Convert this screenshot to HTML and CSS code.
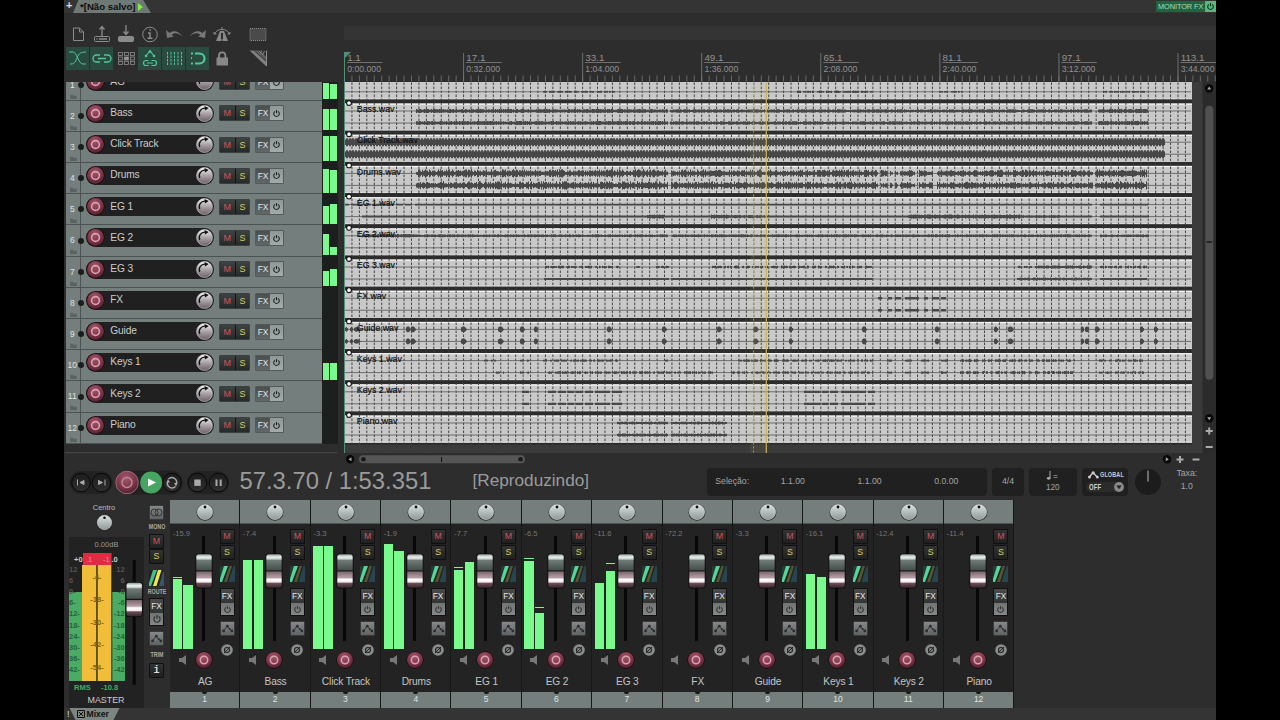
FILE: index.html
```html
<!DOCTYPE html>
<html lang="pt-BR">
<head>
<meta charset="utf-8">
<title>Não salvo</title>
<link rel="stylesheet" href="styles.css">
</head>
<body>
<svg class="defs" aria-hidden="true">
  <defs>
    <radialGradient id="gRed" cx=".45" cy=".3" r=".75"><stop offset="0" stop-color="#a2566a"/><stop offset=".6" stop-color="#7c3448"/><stop offset="1" stop-color="#4a1c29"/></radialGradient>
    <linearGradient id="gKnob" x1="0" y1="0" x2="0" y2="1"><stop offset="0" stop-color="#f4f4f4"/><stop offset=".5" stop-color="#aaa4a8"/><stop offset="1" stop-color="#6e6068"/></linearGradient>
    <linearGradient id="gPan" x1="0" y1="0" x2="0" y2="1"><stop offset="0" stop-color="#dce2e2"/><stop offset="1" stop-color="#8f9898"/></linearGradient>
    <linearGradient id="gBtn" x1="0" y1="0" x2="0" y2="1"><stop offset="0" stop-color="#1c1c1c"/><stop offset="1" stop-color="#303030"/></linearGradient>
    <linearGradient id="gFader" x1="0" y1="0" x2="0" y2="1">
      <stop offset="0" stop-color="#8f9794"/><stop offset=".08" stop-color="#e8f0ec"/><stop offset=".14" stop-color="#c9d2ce"/><stop offset=".18" stop-color="#707a76"/>
      <stop offset=".46" stop-color="#46504c"/><stop offset=".5" stop-color="#151515"/><stop offset=".53" stop-color="#806a72"/><stop offset=".7" stop-color="#b5a0a8"/>
      <stop offset=".75" stop-color="#fff"/><stop offset=".83" stop-color="#f2e8ec"/><stop offset=".87" stop-color="#6b4d57"/><stop offset="1" stop-color="#3a282e"/>
    </linearGradient>
    <symbol id="rec" viewBox="0 0 20 20"><circle cx="10" cy="10" r="9.6" fill="#17090d"/><circle cx="10" cy="10" r="8.9" fill="url(#gRed)"/><circle cx="10" cy="10" r="4.1" fill="none" stroke="#d8a3ae" stroke-width="1.7"/></symbol>
    <symbol id="vol" viewBox="0 0 20 20"><circle cx="10" cy="10" r="8.400" fill="url(#gKnob)" stroke="#d5d0d2" stroke-width=".6"/><path d="M5 12.500A5.800 5.800 0 0 1 11 4.400" fill="none" stroke="#111" stroke-width="1.400"/><path d="M10 2l4.500 2.200-4 2.600z" fill="#111"/></symbol>
    <symbol id="pan" viewBox="0 0 18 18"><circle cx="9" cy="9.4" r="8.4" fill="#222"/><circle cx="9" cy="9" r="7.6" fill="url(#gPan)" stroke="#eef2f2" stroke-width=".5"/><circle cx="9" cy="4" r="1.4" fill="#111"/></symbol>
    <symbol id="pow" viewBox="0 0 10 10"><path d="M3.3 2.6a3.1 3.1 0 1 0 3.4 0M5 1v3.8" fill="none" stroke="currentColor" stroke-width="1.2"/></symbol>
    <symbol id="folder" viewBox="0 0 8 6"><path d="M0 1h3l1 1h4v4H0z" fill="#5b6362"/></symbol>
    <symbol id="env" viewBox="0 0 15 15"><path d="M3 10.300L7 4.800l3 3.400 2.500 2" fill="none" stroke="#2b2e2e" stroke-width="1"/><circle cx="3" cy="10.300" r="1.600" fill="#2b2e2e"/><circle cx="7.300" cy="4.800" r="1.600" fill="#2b2e2e"/><circle cx="12.500" cy="10.300" r="1.600" fill="#2b2e2e"/><circle cx="10" cy="8" r="1.100" fill="#2b2e2e"/></symbol>
    <symbol id="phase" viewBox="0 0 12 12"><circle cx="6" cy="6" r="5.800" fill="#8a8d8d"/><circle cx="6" cy="6" r="2.500" fill="none" stroke="#222" stroke-width="1.100"/><path d="M3 9L9 3" stroke="#222" stroke-width="1"/></symbol>
    <symbol id="spk" viewBox="0 0 8 10"><path d="M0 3h3l4-3v10l-4-3H0z" fill="#777"/></symbol>
    <symbol id="route" viewBox="0 0 15 16"><path d="M0 16L6 0H0z" fill="#203c33"/><path d="M0 16v-3L4 0h4L2 16z" fill="#55d59b"/><path d="M4 16L9.500 0h2.500L7 16z" fill="#5c532f"/><path d="M8.500 16L13.500 0H15v16z" fill="#284450"/></symbol>
    <symbol id="routeOn" viewBox="0 0 15 16"><path d="M0 16v-3L4 0h4L2 16z" fill="#45c08c"/><path d="M4 16L9 0h3.500L7.500 16z" fill="#efe64d"/><path d="M10 16L14 2h1v14z" fill="#35576a"/></symbol>
    <symbol id="fader" viewBox="0 0 18 36"><rect x=".5" y=".5" width="17" height="35" rx="3" fill="#0b0b0b"/><rect x="1.300" y="1.300" width="15.400" height="33.400" rx="2.500" fill="url(#gFader)"/></symbol>
  </defs>
</svg>

<div class="app">
  <header class="tabs">
    <span class="tabs-add">+</span>
    <span class="tab">*[Não salvo]<i class="tab-play"></i></span>
    <span class="monitor">MONITOR FX<b><svg width="9" height="9"><use href="#pow"/></svg></b></span>
  </header>

  <div class="upper">
    <aside class="side">
      <div class="toolbar">
        <span class="tool"><svg viewBox="0 0 24 24"><path d="M7.500 6h6l4 4v8.500h-10zM13.500 6v4h4"/></svg></span>
        <span class="tool"><svg viewBox="0 0 24 24"><rect x="4.500" y="14.500" width="15" height="5" rx="1"/><path d="M12 14V5M9.500 7.500L12 4.500l2.500 3M6.500 17h1M9 17h8" stroke-width="1.300"/></svg></span>
        <span class="tool"><svg viewBox="0 0 24 24"><rect x="4.500" y="14.500" width="15" height="5" rx="1" fill="#8a8a8a"/><path d="M12 3v9M9.500 9.500L12 12.500l2.500-3" stroke-width="1.300"/></svg></span>
        <span class="tool"><svg viewBox="0 0 24 24"><circle cx="12" cy="12.500" r="7.300"/><path d="M10 11h2v5M9.500 16.300h5M11.500 8h1.500" stroke-width="1.400"/></svg></span>
        <span class="tool"><svg viewBox="0 0 24 24"><path d="M4 8l1 8 7-1.500-2.500-1.500c3-3 7-2 11 1.500-4-6-9.500-6.500-13-3.500z" fill="#777" stroke="none"/></svg></span>
        <span class="tool"><svg viewBox="0 0 24 24"><path d="M20 8l-1 8-7-1.500 2.500-1.500c-3-3-7-2-11 1.500 4-6 9.500-6.500 13-3.500z" fill="#777" stroke="none"/></svg></span>
        <span class="tool"><svg viewBox="0 0 24 24"><path d="M10 9h4l4 10h-5V11h-2v8H6z" fill="#888" stroke="none"/><path d="M4.500 12c2-6 13-6 15 0M12 5v2M9 18h6M4 10v2h2.500M20 10v2h-2.500"/></svg></span>
        <span class="tool wide"><svg viewBox="0 0 24 24"><rect x="4" y="6.500" width="16" height="12" fill="#4a4a4a" stroke-dasharray="1 1"/></svg></span>
        <span class="tool on"><svg viewBox="0 0 24 24"><path d="M3 6h4c4 0 5 12 10 12h3M4 18c4 0 5-1 7-6s4-6 9-6"/></svg></span>
        <span class="tool on"><svg viewBox="0 0 24 24"><path d="M10 9H6.500a3.500 3.500 0 0 0 0 7H10M14 9h3.500a3.500 3.500 0 0 1 0 7H14M8 12.500h8" stroke-width="1.300"/></svg></span>
        <span class="tool"><svg viewBox="0 0 24 24"><g stroke-width=".8"><rect x="4.500" y="6.500" width="4" height="3"/><rect x="10.500" y="6.500" width="4" height="3"/><rect x="16.500" y="6.500" width="4" height="3"/><rect x="4.500" y="11" width="4" height="3"/><rect x="10.500" y="11" width="4" height="3" fill="#999"/><rect x="16.500" y="11" width="4" height="3"/><rect x="4.500" y="15.500" width="4" height="3"/><rect x="10.500" y="15.500" width="4" height="3"/><rect x="16.500" y="15.500" width="4" height="3"/></g></svg></span>
        <span class="tool on"><svg viewBox="0 0 24 24"><path d="M8 10l4-5 4 5M10.500 14.500H8a2.500 2.500 0 0 0 0 5h2.500M13.500 14.500H16a2.500 2.500 0 0 1 0 5h-2.500M9 17h6" stroke-width="1.200"/><g fill="#4fc99a" stroke="none"><circle cx="8" cy="10" r="1.300"/><circle cx="12" cy="5.500" r="1.300"/><circle cx="16" cy="10" r="1.300"/></g></svg></span>
        <span class="tool on"><svg viewBox="0 0 24 24"><path d="M5.500 6v13M9 6v13M12.500 6v13M16 6v13M19.500 6v13" stroke-dasharray="2.500 1"/></svg></span>
        <span class="tool on"><svg viewBox="0 0 24 24"><path d="M9 7.500h4.500a4.800 4.800 0 0 1 0 10H9" stroke-width="2.200"/><path d="M5 7.500h2M5 17.500h2M5 12h1" stroke-width="2"/></svg></span>
        <span class="tool"><svg viewBox="0 0 24 24"><rect x="6.500" y="11.500" width="11.500" height="8" fill="#888" stroke="none"/><path d="M9 12V9.500a3.200 3.200 0 0 1 6.400 0V12" stroke-width="1.800"/></svg></span>
        <span class="tool wide"><svg viewBox="0 0 24 24"><path d="M3.500 4.500h4L20.500 16v4.500z" fill="#808080" stroke="none"/><path d="M8 4.500h3.500L20.500 13v1.800z" fill="#5e5e5e" stroke="none"/><path d="M12.500 4.500l8 7.500M15.500 4.500l-1 3M18.500 5l-2 4M20.500 4.500V20"/></svg></span>
      </div>
      <div class="tcp" id="tcp"></div>
    </aside>

    <section class="arrange">
      <div class="band"></div>
      <svg class="ruler" id="ruler" viewBox="344 40 872 41.500"></svg>
      <div class="arrange-body">
        <svg class="canvas" id="canvas" viewBox="344 81.500 858.500 371.500"></svg>
        <svg class="vbar" viewBox="1202.500 81.500 13.500 371.500">
          <circle cx="1208.700" cy="88" r="4.200" fill="#080808"/><path d="M1206.700 89l2-3 2 3z" fill="#aaa"/>
          <rect x="1204.800" y="105.300" width="8" height="274" rx="4" fill="#505050"/><path d="M1206 241.500h5.500" stroke="#111" stroke-width="1.300"/>
          <circle cx="1208.700" cy="417.700" r="4.200" fill="#080808"/><path d="M1206.700 416.700l2 3 2-3z" fill="#aaa"/>
          <path d="M1208.700 427v7M1205.200 430.500h7M1205.200 446.500h7" stroke="#aaa" stroke-width="2"/>
        </svg>
      </div>
    </section>
  </div>

  <svg class="hbar" viewBox="64 452 1152 14">
    <path d="M65 452.700h272" stroke="#4a4a4a"/>
    <circle cx="350.200" cy="459.300" r="4.200" fill="#080808"/><path d="M351.500 457.300l-3 2 3 2z" fill="#aaa"/>
    <rect x="359" y="455.300" width="166" height="8" rx="4" fill="#565656"/>
    <circle cx="363.500" cy="459.300" r="2.300" fill="#1a1a1a"/><circle cx="520.500" cy="459.300" r="2.300" fill="#1a1a1a"/><path d="M441.500 457v5" stroke="#111"/>
    <circle cx="1167" cy="459.300" r="4.200" fill="#080808"/><path d="M1165.800 457.300l3 2-3 2z" fill="#aaa"/>
    <path d="M1180 456v7M1176.500 459.500h7M1192.500 459.500h7" stroke="#aaa" stroke-width="2"/>
  </svg>

  <section class="transport">
    <svg class="controls" viewBox="64 466 170 34">
      <rect x="69.500" y="471" width="43" height="23" rx="11.500" fill="#222"/><rect x="115" y="470.500" width="68" height="24" rx="12" fill="#222"/><rect x="187" y="471" width="42" height="23" rx="11.500" fill="#222"/>
      <g fill="url(#gBtn)" stroke="#080808"><circle cx="81" cy="482.500" r="9.300"/><circle cx="101.500" cy="482.500" r="9.300"/><circle cx="172" cy="482.500" r="9.300"/><circle cx="197.500" cy="482.500" r="9.300"/><circle cx="218.500" cy="482.500" r="9.300"/></g>
      <circle cx="127" cy="482.500" r="11.300" fill="url(#gRed)" stroke="#b98a94" stroke-width=".7"/><circle cx="127" cy="482.500" r="5" fill="none" stroke="#b98a94" stroke-width="1.500"/>
      <circle cx="151.200" cy="482.500" r="11" fill="#45a561"/><path d="M148 478.500l8 4-8 4z" fill="#fff"/>
      <path d="M77.500 479.500v6M84 480.500v4l-4-2z" fill="#aaa" stroke="#aaa" stroke-width="1"/>
      <path d="M105 479.500v6M98.500 480.500v4l4-2z" fill="#aaa" stroke="#aaa" stroke-width="1"/>
      <path d="M168.500 479a4.700 4.700 0 0 1 7.500 5.500M175.500 486.500a4.700 4.700 0 0 1-7.500-5.500" fill="none" stroke="#aaa" stroke-width="1.500"/><path d="M174 483l3.500 0-1.500 3.500zM166.500 482.500h3.500l-2-3.500z" fill="#aaa"/>
      <rect x="194.300" y="479.500" width="6.400" height="6.400" fill="#aaa"/><path d="M216.500 479.500v6.500M220.700 479.500v6.500" stroke="#aaa" stroke-width="2"/>
    </svg>
    <span class="time">57.3.70 / 1:53.351</span>
    <span class="state">[Reproduzindo]</span>
    <div class="box sel"><span>Seleção:</span><span>1.1.00</span><span>1.1.00</span><span>0.0.00</span></div>
    <div class="box sig">4/4</div>
    <div class="box bpm"><svg width="14" height="10" viewBox="0 0 14 10"><path d="M4 0v7" stroke="#aaa"/><ellipse cx="2.700" cy="7.300" rx="1.800" ry="1.400" fill="#aaa"/><path d="M7.500 4.500h4M7.500 6.500h4" stroke="#777"/></svg><span>120</span></div>
    <div class="box glob"><div><svg width="11" height="8" viewBox="0 0 11 8"><path d="M1 6.500l4-5 4.500 5" fill="none" stroke="#ccc" stroke-width="1.300"/><circle cx="1.500" cy="6" r="1.500" fill="#ccc"/><circle cx="5.200" cy="1.800" r="1.600" fill="#ccc"/><circle cx="9.300" cy="6" r="1.500" fill="#ccc"/></svg><b>GLOBAL</b></div><div class="off"><b>OFF</b><svg width="10" height="10" viewBox="0 0 10 10"><circle cx="5" cy="5" r="4.900" fill="#8a8a8a"/><path d="M2.300 3.500h5.400L5 7.300z" fill="#222"/></svg></div></div>
    <svg class="rate" width="28" height="28" viewBox="0 0 28 28"><circle cx="14" cy="14" r="13" fill="#1c1c1c"/><path d="M14 2.500v11" stroke="#bbb"/></svg>
    <div class="taxa"><span>Taxa:</span><span>1.0</span></div>
  </section>

  <section class="mixer">
    <div class="master">
      <div class="master-main">
        <span class="centro">Centro</span>
        <svg width="17" height="17"><use href="#pan"/></svg>
        <svg class="master-meter" id="master" viewBox="69 537 75 171"></svg>
      </div>
      <div class="master-buttons">
        <span class="btn gray"><svg width="13" height="11" viewBox="0 0 13 11"><g fill="none" stroke="#333"><circle cx="4.500" cy="5.500" r="3.500"/><circle cx="8.500" cy="5.500" r="3.500"/></g></svg></span>
        <span class="cap">MONO</span>
        <span class="btn m">M</span><span class="btn s">S</span>
        <svg class="mroute" width="15" height="16"><use href="#routeOn"/></svg>
        <span class="cap">ROUTE</span>
        <span class="btn fx">FX</span><span class="btn pw"><svg width="10" height="10"><use href="#pow"/></svg></span>
        <span class="btn gray menv"><svg width="13" height="13"><use href="#env"/></svg></span>
        <span class="cap trim">TRIM</span>
        <span class="btn info">i</span>
      </div>
    </div>
    <div class="strips" id="strips"></div>
  </section>

  <footer class="dock"><span>!</span><span class="dock-tab"><svg width="8" height="8" viewBox="0 0 8 8"><path d="M.5.5h7v7h-7zM2 2l4 4M6 2L2 6" fill="none" stroke="#111"/></svg>Mixer</span></footer>
</div>
<script src="app.js"></script>
</body>
</html>
```
FILE: styles.css
```css
* { box-sizing: border-box; }
body { margin: 0; background: #000; width: 1280px; height: 720px; overflow: hidden; font-family: "Liberation Sans", Arial, sans-serif; color: #aaa; }
svg { display: block; flex: none; }
.defs { width: 0; height: 0; position: absolute; }
.app { width: 1152px; height: 720px; margin: 0 64px; background: #2d2d2d; display: flex; flex-direction: column; overflow: hidden; }

.tabs { height: 13px; flex: none; background: #343434; display: flex; align-items: flex-start; }
.tabs-add { width: 9px; padding-left: 2px; font-size: 11px; line-height: 11px; font-weight: bold; color: #ddd; }
.tab { width: 78px; height: 13px; padding-left: 7px; background: #6e7874; clip-path: polygon(7% 0, 90% 0, 100% 100%, 0 100%); color: #0c0c0c; font-weight: bold; font-size: 9.600px; line-height: 12px; display: flex; align-items: center; white-space: nowrap; gap: 3px; }
.tab-play { border-left: 5px solid #7df03c; border-top: 4px solid transparent; border-bottom: 4px solid transparent; }
.monitor { margin: 1px 0 0 auto; height: 11px; width: 60px; background: #24633f; color: #a9dcb8; font-size: 7.400px; line-height: 11px; padding-left: 2px; display: flex; justify-content: space-between; white-space: nowrap; border-radius: 1px; letter-spacing: -.100px; }
.monitor b { width: 11px; background: #5bb57c; color: #10361f; display: grid; place-items: center; }

.upper { height: 439px; flex: none; display: flex; }
.side { width: 280px; flex: none; display: flex; flex-direction: column; }
.toolbar { height: 68.500px; flex: none; padding: 9px 0 0 2px; display: grid; grid-template-columns: repeat(7, 24px) 48px; grid-auto-rows: 24px; align-content: start; }
.tool { width: 22.500px; height: 22.500px; margin-top: 1px; }
.tool.wide { margin-left: 12px; }
.tool svg { width: 24px; height: 24px; margin: -1px 0 0 -.500px; fill: none; stroke: #8c8c8c; stroke-width: 1; }
.tool.on { background: #2b4a40; }
.tool.on svg { stroke: #4fc99a; }

.tcp { height: 362.300px; flex: none; margin-left: 1.500px; width: 272.500px; overflow: hidden; display: flex; flex-direction: column; justify-content: flex-end; background: #1d1f1e; }
.track { height: 31.200px; flex: none; display: flex; }
.track-panel { width: 256.300px; background: #747e7c; border-bottom: 1px solid #4b5352; display: flex; align-items: flex-start; }
.track-num { width: 15.500px; height: 100%; border-right: 1px solid #4b5352; font-size: 8.500px; color: #dde3e2; text-align: center; padding: 10px 1px 0 0; line-height: 10px; flex: none; }
.track-num svg { margin: 4px 0 0 4px; }
.track-dot { width: 6px; height: 6px; border-radius: 50%; background: #1a1d1d; margin: 12.200px 2.300px 0 -3px; flex: none; }
.pill { width: 128px; height: 19px; margin-top: 2.900px; border-radius: 10px; background: #202020; display: flex; align-items: center; font-size: 10.200px; letter-spacing: -.150px; color: #ccc; flex: none; line-height: 19px; }
.pill b { font-weight: normal; flex: 1; padding: 0 0 1.400px 5px; white-space: nowrap; }
.pair { display: flex; height: 16px; margin: 4.700px 0 0 4.500px; border: 1px solid #3a3f3e; border-radius: 1px; font-size: 9px; line-height: 14px; text-align: center; background: linear-gradient(#3d4241, #272a2a); }
.pair span { width: 14.800px; }
.pair span + span { border-left: 1px solid #151515; }
.m { color: #cf5560; }
.s { color: #d6cf5e; }
.pair.fxp { background: linear-gradient(#4a5050, #606766); color: #e4e8e8; margin-left: 4.500px; font-size: 8.300px; border-color: #535a59; width: 29px; }
.pair.fxp span + span { background: linear-gradient(#8f9897, #a2abaa); border: 0; width: 13px; color: #222; display: grid; place-items: center; }
.track-meter { display: flex; align-items: flex-end; gap: 1.300px; padding: 0 0 1px 1.200px; width: 16px; height: 30.500px; }
.track-meter i { width: 6.200px; background: #78fb8c; }

.arrange { flex: 1; min-width: 0; display: flex; flex-direction: column; }
.band { height: 14px; margin-top: 13px; background: #343434; flex: none; }
.ruler { width: 872px; height: 41.500px; }
.ruler text { fill: #929292; }
.arrange-body { display: flex; background: #2b2b2b; height: 370.500px; }
.canvas { width: 858.500px; height: 371.500px; }
.vbar { width: 13.500px; height: 371.500px; }
.hbar { width: 1152px; height: 14px; }

.transport { height: 34px; flex: none; display: flex; align-items: flex-start; font-size: 8.700px; color: #a5a5a5; }
.controls { width: 170px; height: 34px; }
.time { width: 234px; padding-left: 5.500px; font-size: 23.800px; line-height: 29px; color: #9b9b9b; white-space: nowrap; flex: none; }
.state { width: 239.300px; padding-left: 4.500px; font-size: 17.200px; line-height: 28px; color: #9b9b9b; flex: none; }
.box { height: 28px; margin: 1.500px 5px 0 0; background: #202020; border-radius: 4px; display: flex; align-items: center; justify-content: center; flex: none; line-height: 10px; padding-bottom: 1px; }
.sel { width: 280px; justify-content: flex-start; padding-left: 8px; }
.sel span { width: 76.700px; flex: none; }
.sel span:first-child { width: 65.500px; }
.sel span:last-child { width: 30px; }
.sig { width: 31.500px; }
.bpm { width: 48px; flex-direction: column; gap: 3px; font-size: 8.200px; }
.bpm span { line-height: 8px; }
.glob { width: 46px; flex-direction: column; gap: 2.500px; color: #ccc; font-size: 7.800px; }
.glob div { display: flex; gap: 1px; align-items: center; height: 9px; }
.glob b { transform: scaleX(.7); transform-origin: 0 50%; width: 22px; letter-spacing: .200px; }
.glob .off { background: #2b2b2b; border-radius: 5px; width: 38px; height: 10px; padding-left: 3px; justify-content: space-between; font-size: 8.500px; }
.rate { margin: 2px 0 0 1px; }
.taxa { width: 50px; margin-left: 0; display: flex; flex-direction: column; align-items: center; gap: 3px; line-height: 10px; padding-top: 1.500px; }

.mixer { height: 208px; flex: none; display: flex; }
.master { width: 106px; flex: none; display: flex; }
.master-main { width: 80px; display: flex; flex-direction: column; align-items: center; padding-top: 3px; }
.centro { font-size: 7.500px; line-height: 9px; margin-bottom: 2px; color: #bbb; }
.master-meter { width: 75px; height: 171px; margin: 6px 0 0 5px; }
.master-buttons { width: 26px; padding: 5px 0 0 5px; display: flex; flex-direction: column; }
.btn { width: 15px; height: 15px; border: 1px solid #101010; border-radius: 1px; background: linear-gradient(#333, #202020); font-size: 8.800px; line-height: 13px; text-align: center; display: grid; place-items: center; flex: none; }
.btn.gray { background: linear-gradient(#858888, #606363); border-color: #3a3a3a; }
.btn.fx { background: linear-gradient(#4a4c4c, #333535); color: #e6e6e6; border-bottom: 0; font-size: 8.300px; }
.btn.pw { height: 13px; background: linear-gradient(#707474, #858888); color: #333; border-top: 0; }
.btn.info { color: #ddd; font: bold 10px/13px "Liberation Mono", monospace; }
.cap { width: 26px; margin: 2px 0 2.500px -5.500px; text-align: center; font-size: 7.400px; line-height: 9px; font-weight: bold; color: #aaa; transform: scaleX(.72); }
.mroute { margin: 6px 0 -1px; background: #222; }
.menv { margin-top: 5px; }
.cap.trim { margin: 4px 0 3.500px -5.500px; }

.strips { display: flex; }
.strip { width: 70.360px; display: flex; flex-direction: column; border-right: 1px solid #171717; background: #232323; }
.strip-pan { height: 24px; background: #757e7d; border-bottom: 1px solid #4d5453; display: flex; justify-content: center; padding: 2.500px 0 0 .500px; }
.strip-body { height: 142px; display: flex; }
.strip-left { width: 25.500px; padding-left: 2.700px; display: flex; flex-direction: column; flex: none; }
.strip-vol { font-size: 7.600px; line-height: 9px; color: #767676; padding-top: 5px; height: 18px; white-space: nowrap; }
.bars { height: 107px; display: flex; align-items: flex-end; gap: 1.500px; }
.bar { width: 9.200px; flex: none; }
.bar i { display: block; background: #78fb8c; }
.bar em { display: block; height: 1px; background: #78fb8c; }
.strip-left > svg { margin: 6px 0 0 6px; }
.strip-mid { width: 24px; position: relative; padding: 12px 0 0 6.700px; flex: none; }
.slot { width: 3px; height: 105px; background: #080808; }
.thumb { position: absolute; left: -.500px; top: 29px; }
.strip-mid .recbtn { margin: 10px 0 0 -7.300px; }
.strip-right { width: 15px; margin-top: 5px; display: flex; flex-direction: column; flex: none; }
.strip-right .m + .s { margin-top: .500px; }
.strip-right > svg { margin: 6px 0 6.500px; background: #1b2523; }
.strip-right .gray { margin-top: 5px; }
.strip-right > svg:last-child { margin: 7.500px 0 0 1.500px; background: none; }
.strip-name { height: 26px; text-align: center; font-size: 10.200px; letter-spacing: -.150px; padding-left: 1px; line-height: 31px; color: #c4c4c4; }
.strip-num { height: 16px; background: #747e7c; text-align: center; font-size: 8.500px; line-height: 11px; color: #dde3e2; display: flex; flex-direction: column; align-items: center; }
.strip-num::before { content: ""; width: 5px; height: 2px; background: #151515; border-radius: 0 0 3px 3px; }

.dock { height: 12px; flex: none; background: #343434; display: flex; font-size: 9px; line-height: 12px; color: #ddd; padding-left: 3px; }
.dock-tab { width: 50px; margin-left: 0; background: #7b8581; color: #111; font-weight: bold; clip-path: polygon(0 0, 100% 0, 88% 100%, 12% 100%); display: flex; align-items: center; gap: 2px; padding-left: 7px; font-size: 8.600px; }
```
FILE: app.js
```js
// name, strip volume, track meter heights [L,R], mixer meter heights [L,R], peak gaps above bars [L,R]
const tracks = [
  ["AG", "-15.9", [16, 15], [70, 64], [1, 0]],
  ["Bass", "-7.4", [21, 21], [89, 89], [0, 0]],
  ["Click Track", "-3.3", [25, 25], [103, 103], [0, 0]],
  ["Drums", "-1.9", [24, 23], [105, 98], [0, 0]],
  ["EG 1", "-7.7", [18, 20], [79, 87], [2, 0]],
  ["EG 2", "-6.5", [21, 8], [88, 36], [2, 5]],
  ["EG 3", "-11.6", [15, 17], [66, 78], [0, 7]],
  ["FX", "-72.2", [0, 0], [0, 0], [0, 0]],
  ["Guide", "-3.3", [0, 0], [0, 0], [0, 0]],
  ["Keys 1", "-16.1", [17, 17], [75, 72], [0, 0]],
  ["Keys 2", "-12.4", [0, 0], [0, 0], [0, 0]],
  ["Piano", "-11.4", [0, 0], [0, 0], [0, 0]]
];
const use = (id, w, h = w, cls = "") => `<svg class="${cls}" width="${w}" height="${h}"><use href="#${id}"/></svg>`;

document.getElementById("tcp").innerHTML = tracks.map(([name, , m], i) => `
  <div class="track"><div class="track-panel">
    <div class="track-num">${i + 1}${use("folder", 7, 5)}</div><i class="track-dot"></i>
    <div class="pill">${use("rec", 19)}<b>${name}</b>${use("vol", 19)}</div>
    <div class="pair"><span class="m">M</span><span class="s">S</span></div>
    <div class="pair fxp"><span>FX</span><span>${use("pow", 9)}</span></div>
  </div><div class="track-meter"><i style="height:${m[0]}px"></i><i style="height:${m[1]}px"></i></div></div>`).join("");

const bar = (h, gap) => `<div class="bar">${gap ? `<em style="margin-bottom:${gap}px"></em>` : ""}<i style="height:${h}px"></i></div>`;
document.getElementById("strips").innerHTML = tracks.map(([name, vol, , m, p], i) => `
  <div class="strip"><div class="strip-pan">${use("pan", 18)}</div>
    <div class="strip-body">
      <div class="strip-left"><span class="strip-vol">${vol}</span><div class="bars">${bar(m[0], p[0])}${bar(m[1], p[1])}</div>${use("spk", 8, 10)}</div>
      <div class="strip-mid"><div class="slot"></div>${use("fader", 18, 36, "thumb")}${use("rec", 18, 18, "recbtn")}</div>
      <div class="strip-right"><span class="btn m">M</span><span class="btn s">S</span>${use("route", 15, 16)}<span class="btn fx">FX</span><span class="btn pw">${use("pow", 9)}</span><span class="btn gray">${use("env", 13)}</span>${use("phase", 12)}</div>
    </div>
    <div class="strip-name">${name}</div><div class="strip-num">${i + 1}</div></div>`).join("");

// Master meter
const labels = ["12", "6", "0-", "6-", "12-", "18-", "24-", "30-", "36-", "42-"];
const flip = s => s.endsWith("-") ? "-" + s.slice(0, -1) : s;
let mm = `<rect x="69" y="537" width="75" height="171" fill="#222"/>
  <rect x="69" y="592" width="13" height="89" fill="#4aab64"/><rect x="112.300" y="592" width="12.700" height="89" fill="#4aab64"/>
  <rect x="82" y="565" width="14.500" height="116" fill="#f2bd38"/><rect x="97.500" y="565" width="13.800" height="116" fill="#f2bd38"/>
  <rect x="83" y="553" width="28.500" height="12" fill="#e02b45"/><path d="M96.900 565v116" stroke="#4a3a10"/>
  <g font-size="7.500" fill="#999"><text x="106.500" y="546.500" text-anchor="middle">0.00dB</text>
  <text x="74" y="561.500" font-weight="bold" fill="#ccc">+0</text><text x="86" y="561.500" fill="#f7889a">.1</text><text x="103" y="561.500" fill="#f7889a">-1</text><text x="111.500" y="561.500" font-weight="bold" fill="#ccc">.0</text></g>`;
labels.forEach((t, i) => {
  const y = 571.500 + i * 11.200;
  const c = i < 3 ? "#555" : "#256338";
  mm += `<g font-size="7.500" font-weight="bold" fill="${c}"><text x="69" y="${y}">${t}</text><text x="124.700" y="${y}" text-anchor="end">${flip(t)}</text></g>`;
});
[6, 18, 30, 42, 54].forEach((n, i) => {
  mm += `<text x="97" y="${579.500 + i * 22.500}" text-anchor="middle" font-size="7.500" font-weight="bold" fill="#846313">-${n}-</text>`;
});
mm += `<g font-size="7.500" font-weight="bold" fill="#4aab64"><text x="74" y="689.500">RMS</text><text x="101" y="689.500">-10.8</text></g>
  <text x="106" y="702.500" text-anchor="middle" font-size="8.900" fill="#ccc">MASTER</text>
  <rect x="132.700" y="560" width="3" height="125" fill="#080808"/><use href="#fader" x="125.200" y="581.500" width="18" height="36"/>`;
document.getElementById("master").innerHTML = mm;

// Ruler
const BAR = 7.442;
const marks = ["0:00.000", "0:32.000", "1:04.000", "1:36.000", "2:08.000", "2:40.000", "3:12.000", "3:44.000"];
let rl = "";
for (let i = 0; i < 118; i++) rl += `<path d="M${344.500 + i * BAR} 75.500v6" stroke="#777" stroke-width=".8"/>`;
marks.forEach((t, i) => {
  const x = 344.500 + i * BAR * 16;
  rl += `<path d="M${x} 53v28.500M${x + 2.500} 62.500h35.500" stroke="#777" stroke-width=".9"/><text x="${x + 2.700}" y="61.300" font-size="9.800">${1 + i * 16}.1</text><text x="${x + 2.700}" y="72.300" font-size="8.700">${t}</text>`;
});
rl += `<path d="M344 52h7l-7 7z" fill="#4f9079"/><path d="M344.500 52v30" stroke="#4f9079"/>`;
document.getElementById("ruler").innerHTML = rl;

// Waveforms: [from, to, amplitude, style]; "d" dashed, "b" blob, "r" regular, "s" solid
let seed = 7;
const rnd = () => (seed = (seed * 16807) % 2147483647) / 2147483647;
const blobs = [[345, 348], [350, 353], [354, 361], [406, 411], [411, 416], [461, 467], [498, 504], [520, 525], [534, 538], [607, 612], [662, 667], [717, 722], [753, 759], [789, 793], [862, 867], [935, 940], [994, 998], [1008, 1014], [1081, 1084], [1085, 1089], [1095, 1100], [1140, 1144], [1154, 1158]].map(([a, b]) => [a, b, a < 405 ? 2.300 : 2.900, "b"]);
const k2 = [[522, 529], [548, 556], [558, 566], [568, 574], [576, 583], [585, 593], [595, 610], [612, 622], [804, 820], [822, 828], [830, 838], [841, 865], [868, 875]].map(([a, b]) => [a, b, 1.100, "s"]);
const fx = [[878, 882], [888, 892], [895, 901], [905, 919], [924, 928], [932, 939], [941, 946]].map(([a, b]) => [a, b, 1.200, "s"]);
const drums = [[416, 668, 3.600], [671, 878, 3.400], [881, 888, 2.800], [890, 893, 2.500], [895, 898, 2.500], [900, 915, 3], [919, 933, 3], [937, 1093, 3.100], [1095, 1147, 3.600]].map(s => [...s, "v"]);
const bass = [[416, 668, 1.900], [670, 1092, 1.700], [1098, 1148, 2]];
const waves = [
  [[], [[543, 617, 1, "d"], [797, 872, 1.100, "d"], [939, 962, .8, "d"], [1103, 1145, .9, "d"]]],
  [bass, bass],
  [[[345, 1165, 4, "r"]], [[345, 1165, 4, "r"]]],
  [drums, drums],
  [[[345, 418, .8, "d"], [418, 1092, .9, "s"], [1100, 1148, .9, "s"]], [[362, 1092, 1, "s"], [647, 664, 2], [711, 727, 2], [727, 765, 1.500, "d"], [908, 1020, 2], [1020, 1060, 1.300, "d"], [1100, 1149, 1, "s"]]],
  [[[362, 418, 1.700], [418, 668, 1.400], [672, 1092, 1.400], [1100, 1149, 1.300]], []],
  [[[545, 619, 1.200, "d"], [636, 640, 1, "d"], [656, 669, 1.200, "d"], [712, 872, 1.300, "d"], [1018, 1040, 1.100, "d"], [1035, 1092, 1.500], [1100, 1147, 1.300, "d"]], [[544, 669, 1, "s"], [671, 873, 1, "s"], [1017, 1092, 1.400], [1100, 1147, 1, "s"]]],
  [fx, fx],
  [blobs, blobs],
  [[[484, 496, 1, "d"], [520, 529, 1, "d"], [543, 619, 1.200, "d"], [665, 668, 1, "d"], [738, 873, 1.200, "d"], [887, 892, 1.200], [905, 912, 1.200], [921, 929, 1.200], [941, 948, 1.200], [960, 1075, 1.300, "d"], [1099, 1145, 1.200, "d"]], [[496, 504, 1, "d"], [520, 529, 1.200, "d"], [548, 715, 1.300, "d"], [731, 873, 1.200, "d"], [887, 892, 1], [905, 911, 1], [921, 929, 1.200], [941, 947, 1.300], [960, 1075, 1.400, "d"], [1099, 1146, 1.200, "d"]]],
  [k2, k2],
  [[[617, 668, 1.300], [671, 727, 1.300]], [[617, 668, 1.500], [671, 727, 1.500]]]
];
function wave(y, [a, b, amp, style]) {
  let d = "", on = true, left = 4;
  for (let x = a; x < b; x += 1) {
    let h = Math.max(.8, amp * (.6 + rnd() * .5));
    if (style === "v") h = amp * (.4 + Math.pow(rnd(), 1.500) * .8);
    if (style === "r") h = amp * (Math.floor(x - a) % 3 ? 1 : .68);
    if (style === "b") h = amp * Math.sin(Math.PI * Math.min(1, .25 + (x - a) / (b - a) * .8));
    if (style === "s") h = amp;
    if (style === "d") {
      if (--left < 0) { on = !on; left = on ? 1 + rnd() * 6 : rnd() * 2.500; }
      if (!on) continue;
    }
    d += `M${x + .5} ${(y - h).toFixed(2)}V${(y + h).toFixed(2)}`;
  }
  return `<path d="${d}" stroke="#484848" stroke-width="1.050"/>`;
}
let cv = `<rect x="344" y="81" width="858.500" height="372" fill="#3b3b3b"/>`;
tracks.forEach((_, i) => {
  const t = 103 + 31.200 * (i - 1);
  cv += `<rect x="344" y="${t - 4}" width="848" height="4.500" fill="#2c2c2c"/><rect x="344" y="${t}" width="848" height="27.200" fill="#c9c9c9"/><rect x="344" y="${t}" width="848" height="1.300" fill="#f2f2f2"/><rect x="344" y="${t + 26.200}" width="848" height="1" fill="#dedede"/>`;
});
cv += `<rect x="344" y="442.500" width="848" height="1.700" fill="#2c2c2c"/>`;
for (let i = 1; i < 116; i++) {
  const x = 344.500 + i * BAR;
  cv += `<path d="M${x} 82V453" stroke="#3c3c3c" stroke-width=".95" stroke-dasharray="2.500 1.500"/>`;
}
tracks.forEach(([name], i) => {
  const t = 103 + 31.200 * (i - 1);
  waves[i].forEach((chan, c) => {
    const y = t + (c ? 19.500 : 7.500);
    cv += `<path d="M345 ${y}H1191" stroke="#555" stroke-width=".8"/>`;
    chan.forEach(s => { cv += wave(y, s); });
  });
  if (i) cv += `<text x="356.800" y="${t + 8.600}" font-size="8.800" fill="#111" stroke="#111" stroke-width=".2">${name}.wav</text><circle cx="349" cy="${t - .5}" r="2.400" fill="#fff" stroke="#111" stroke-width="1.100"/>`;
});
cv += `<rect x="750" y="82" width="16" height="371" fill="#d8c860" opacity=".07"/><path d="M766.300 82V453" stroke="#c9b35a" stroke-width="1.200"/><path d="M753.500 82V453" stroke="#d9cc80" stroke-width=".6" stroke-dasharray="2 2"/><path d="M344.500 81V453" stroke="#4f9079"/>`;
document.getElementById("canvas").innerHTML = cv;
```
